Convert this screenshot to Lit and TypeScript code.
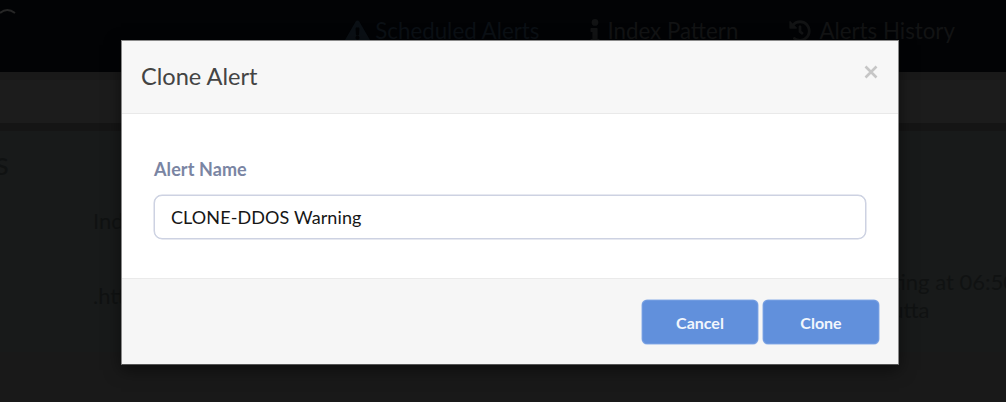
import { LitElement, html, css } from "lit";
import { customElement } from "lit/decorators.js";

@customElement("app-root")
export class AppRoot extends LitElement {
  static styles = css`
    :host {
      display: block;
      position: relative;
      width: 1006px;
      height: 402px;
      overflow: hidden;
      font-family: Lato, "Open Sans", sans-serif;
      background: #191919;
    }
    .page { display: flex; flex-direction: column; height: 402px; }
    .topbar {
      height: 72px;
      flex: none;
      background: #020305;
      position: relative;
      display: flex;
      justify-content: flex-end;
      gap: 51px;
      padding: 13px 51px 0 0;
      box-sizing: border-box;
      font-size: 22.3px;
      line-height: 36px;
    }
    .nav { display: flex; align-items: center; height: 36px; white-space: nowrap; }
    .nav.blue { color: #0b1015; gap: 5px; }
    .nav.info { color: #121314; gap: 7px; }
    .nav.hist { color: #121314; gap: 8px; }
    .nav svg { flex: none; fill: currentColor; }
    .logo {
      position: absolute;
      left: 0;
      top: 7px;
      width: 16px;
      height: 10px;
    }
    .band {
      flex: none;
      height: 43px;
      margin: 8px 0;
      background: #1c1c1c;
      box-shadow: 0 -8px 0 #191919, 0 8px 0 #151515;
    }
    .content {
      flex: none;
      height: 221px;
      box-sizing: border-box;
      margin-top: 0;
      background: #181a1a;
      color: #101212;
      font-size: 22px;
      line-height: 28px;
      overflow: hidden;
    }
    .heading { font-size: 32px; line-height: 40px; padding-top: 12px; margin-left: -5px; }
    .rows {
      display: grid;
      grid-template-columns: 93px 1fr 160px;
      row-gap: 33px;
      margin-top: 24px;
      align-items: center;
    }
    .when { white-space: nowrap; }
    .first { display: block; padding-left: 8px; }
    .second { display: block; padding-left: 4px; }
    .modal {
      position: absolute;
      left: 121px;
      top: 40px;
      width: 778px;
      height: 325px;
      box-sizing: border-box;
      border: 1px solid #8a8a8a;
      border-bottom-color: #555;
      background: #fff;
      display: flex;
      flex-direction: column;
      box-shadow: 0 5px 15px rgba(0, 0, 0, 0.5);
    }
    .mhead {
      flex: none;
      height: 73px;
      box-sizing: border-box;
      background: #f7f7f7;
      border-bottom: 1px solid #e9e9e9;
      display: flex;
      justify-content: space-between;
      padding: 18px 20px 0 19px;
    }
    .mtitle { font-size: 23.6px; line-height: 34px; color: #444; font-weight: 400; }
    .close { margin-top: 6px; width: 14px; height: 14px; }
    .close svg { display: block; }
    .mbody { flex: 1; padding: 44px 32px 0 32px; }
    .label { font-size: 18px; line-height: 22px; font-weight: 700; color: #7a85a3; letter-spacing: 0.1px; }
    .input {
      margin-top: 15px;
      height: 44px;
      box-sizing: border-box;
      border: 1px solid #cdd2e2;
      box-shadow: 0 0 0 0.5px #cdd2e2;
      border-radius: 8px;
      padding: 0 16px;
      display: flex;
      align-items: center;
      font-size: 18px;
      font-weight: 400;
      letter-spacing: 0.1px;
      color: #161616;
      background: #fff;
    }
    .mfoot {
      flex: none;
      height: 86px;
      box-sizing: border-box;
      background: #f6f6f6;
      border-top: 1px solid #eaeaea;
      display: flex;
      justify-content: flex-end;
      gap: 5px;
      padding: 21px 19px 0 0;
    }
    .btn {
      width: 116px;
      height: 44px;
      box-sizing: border-box;
      background: #6190dc;
      border: 1px solid #6f9ae0;
      box-shadow: 0 0 0 0.5px #8aaee8;
      border-radius: 5px;
      color: #f2f6fc;
      font-size: 16px;
      font-weight: 700;
      display: flex;
      align-items: center;
      justify-content: center;
    }
  `;

  render() {
    return html`
      <div class="page">
        <div class="topbar">
          <svg class="logo" viewBox="0 0 16 10" fill="none" stroke="#262626" stroke-width="2">
            <path d="M0 6 Q7 0 15 6" />
          </svg>
          <div class="nav blue">
            <svg width="25" height="23" viewBox="0 0 576 512"><path d="M569.5 440 329.6 24c-18.4-32-64.7-32-83.2 0L6.5 440c-18.4 31.9 4.6 72 41.6 72h479.8c36.9 0 60-40 41.6-72zM288 354c25.4 0 46 20.6 46 46s-20.6 46-46 46-46-20.6-46-46 20.6-46 46-46zm-43.7-165.3c-.7-13.7 10.3-25.3 24-25.3h39.4c13.7 0 24.7 11.5 24 25.3l-7.3 136c-.6 12.7-11.2 22.7-24 22.7h-24.9c-12.7 0-23.3-10-24-22.7z"/></svg>
            <span>Scheduled Alerts</span>
          </div>
          <div class="nav info">
            <svg width="10" height="24" viewBox="0 0 192 512"><path d="M20 424h20V279H20c-11 0-20-9-20-20v-48c0-11 9-20 20-20h112c11 0 20 9 20 20v213h20c11 0 20 9 20 20v48c0 11-9 20-20 20H20c-11 0-20-9-20-20v-48c0-11 9-20 20-20zM96 0a72 72 0 1 1 0 144A72 72 0 0 1 96 0z"/></svg>
            <span>Index Pattern</span>
          </div>
          <div class="nav hist">
            <svg width="22" height="22" viewBox="0 0 512 512"><path d="M504 255.5c.3 136.6-111.2 248.4-247.8 248.5-59 0-113.2-20.5-155.8-54.9-11.1-8.9-11.9-25.5-1.8-35.6l11.3-11.3c8.6-8.6 22.4-9.6 31.9-2 31.4 25 71.2 39.8 114.2 39.8 101.2 0 183-81.9 183-183 0-101.2-81.9-183-183-183-48.6 0-92.7 18.9-125.4 49.7l50.4 50.4c10.1 10.1 2.9 27.4-11.3 27.4H24c-8.8 0-16-7.2-16-16V40.5c0-14.3 17.2-21.4 27.3-11.3l49.4 49.4C129.2 36.2 189.4 8 256 8c136.8 0 247.7 110.8 248 247.5zM323 334l10-13c8.1-10.5 6.2-25.6-4.3-33.7L288 255.8V152c0-13.3-10.7-24-24-24h-16c-13.3 0-24 10.7-24 24v135l65.4 50.9c10.5 8.1 25.6 6.2 33.6-4.9z"/></svg>
            <span>Alerts History</span>
          </div>
        </div>
        <div class="band"></div>
        <div class="content">
          <div class="heading">s</div>
          <div class="rows">
            <span></span><span>Ind</span><span></span>
            <span></span><span>.htt</span>
            <span class="when"><span class="first">Starting at 06:50</span><span class="second">Calcutta</span></span>
          </div>
        </div>
      </div>
      <div class="modal">
        <div class="mhead">
          <div class="mtitle">Clone Alert</div>
          <div class="close">
            <svg width="14" height="14" viewBox="0 0 14 14" stroke="#c6c6c6" stroke-width="2.6"><path d="M1.5 1.5 12.5 12.5M12.5 1.5 1.5 12.5" /></svg>
          </div>
        </div>
        <div class="mbody">
          <div class="label">Alert Name</div>
          <div class="input">CLONE-DDOS Warning</div>
        </div>
        <div class="mfoot">
          <div class="btn">Cancel</div>
          <div class="btn">Clone</div>
        </div>
      </div>
    `;
  }
}
